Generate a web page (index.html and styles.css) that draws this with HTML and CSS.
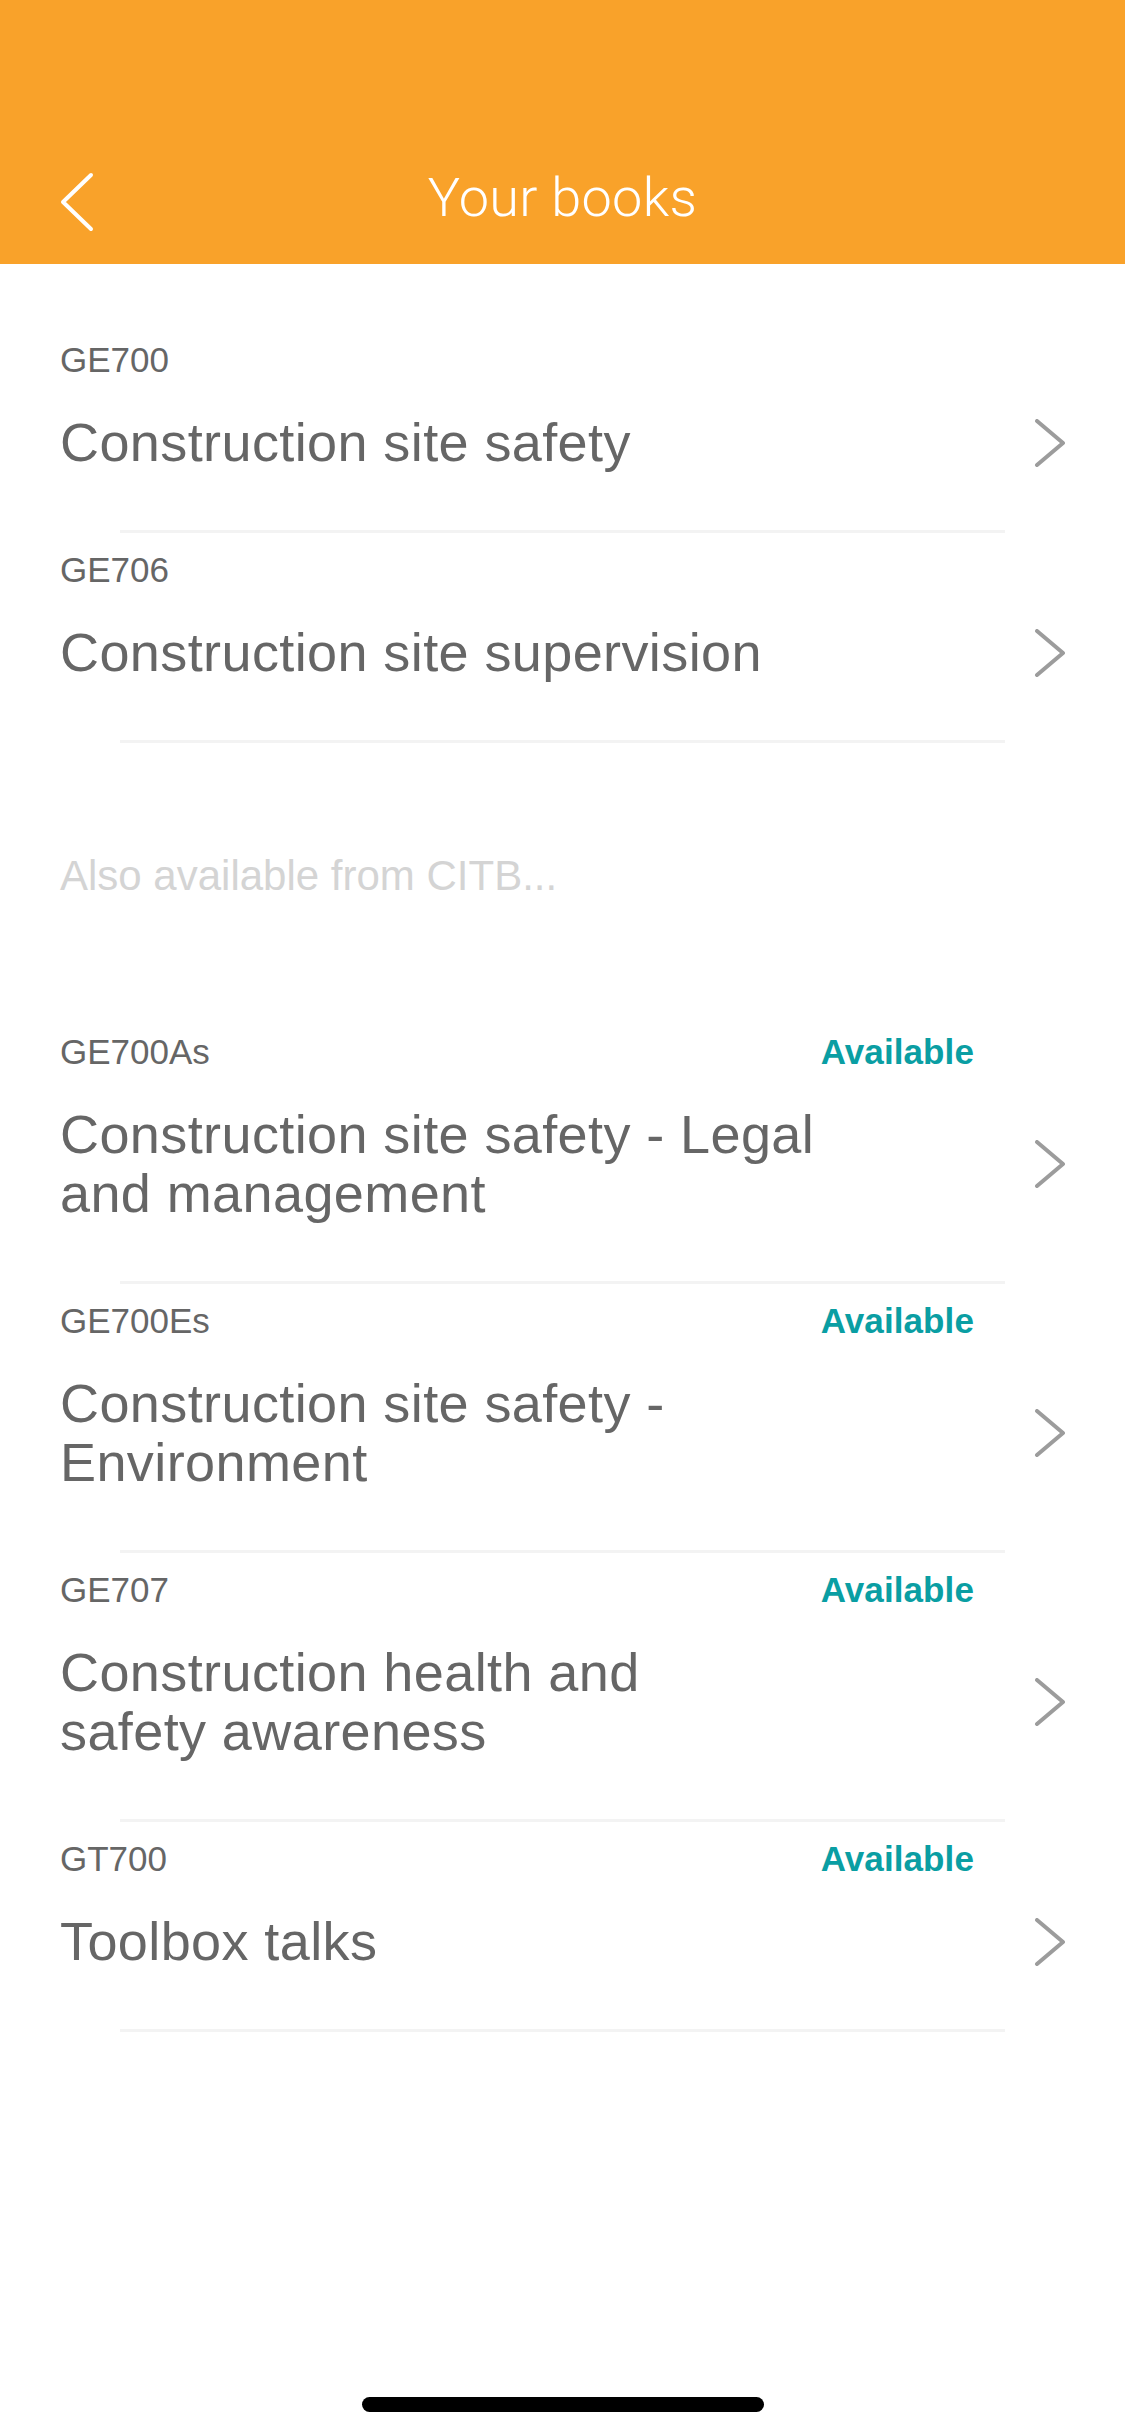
FILE: index.html
```html
<!DOCTYPE html>
<html lang="en">
<head>
<meta charset="utf-8">
<title>Your books</title>
<link rel="stylesheet" href="styles.css">
</head>
<body>
<div class="screen">
  <header class="appbar">
    <div class="statusbar"></div>
    <nav class="navbar">
      <button class="back" aria-label="Back">
        <svg class="back-icon" viewBox="0 0 36 60" width="36" height="60">
          <polyline points="33,3 5,30 33,57" fill="none" stroke="#ffffff" stroke-width="4" stroke-linecap="round" stroke-linejoin="round"/>
        </svg>
      </button>
      <h1 class="nav-title">Your books</h1>
      <span class="nav-spacer"></span>
    </nav>
  </header>

  <main class="content">
    <section class="group group-owned">
      <a class="row">
        <div class="row-inner">
          <div class="code-line"><span class="code">GE700</span></div>
          <div class="title-line">
            <span class="title">Construction site safety</span>
            <svg class="chev" viewBox="0 0 32 48" width="32" height="48"><polyline points="3,2 29,24 3,46" fill="none" stroke="#9c9c9c" stroke-width="4" stroke-linecap="round" stroke-linejoin="round"/></svg>
          </div>
        </div>
      </a>
      <a class="row">
        <div class="row-inner">
          <div class="code-line"><span class="code">GE706</span></div>
          <div class="title-line">
            <span class="title">Construction site supervision</span>
            <svg class="chev" viewBox="0 0 32 48" width="32" height="48"><polyline points="3,2 29,24 3,46" fill="none" stroke="#9c9c9c" stroke-width="4" stroke-linecap="round" stroke-linejoin="round"/></svg>
          </div>
        </div>
      </a>
    </section>

    <p class="section-label">Also available from CITB...</p>

    <section class="group group-store">
      <a class="row">
        <div class="row-inner">
          <div class="code-line"><span class="code">GE700As</span><span class="status">Available</span></div>
          <div class="title-line">
            <span class="title">Construction site safety - Legal<br>and management</span>
            <svg class="chev" viewBox="0 0 32 48" width="32" height="48"><polyline points="3,2 29,24 3,46" fill="none" stroke="#9c9c9c" stroke-width="4" stroke-linecap="round" stroke-linejoin="round"/></svg>
          </div>
        </div>
      </a>
      <a class="row">
        <div class="row-inner">
          <div class="code-line"><span class="code">GE700Es</span><span class="status">Available</span></div>
          <div class="title-line">
            <span class="title">Construction site safety -<br>Environment</span>
            <svg class="chev" viewBox="0 0 32 48" width="32" height="48"><polyline points="3,2 29,24 3,46" fill="none" stroke="#9c9c9c" stroke-width="4" stroke-linecap="round" stroke-linejoin="round"/></svg>
          </div>
        </div>
      </a>
      <a class="row">
        <div class="row-inner">
          <div class="code-line"><span class="code">GE707</span><span class="status">Available</span></div>
          <div class="title-line">
            <span class="title">Construction health and<br>safety awareness</span>
            <svg class="chev" viewBox="0 0 32 48" width="32" height="48"><polyline points="3,2 29,24 3,46" fill="none" stroke="#9c9c9c" stroke-width="4" stroke-linecap="round" stroke-linejoin="round"/></svg>
          </div>
        </div>
      </a>
      <a class="row">
        <div class="row-inner">
          <div class="code-line"><span class="code">GT700</span><span class="status">Available</span></div>
          <div class="title-line">
            <span class="title">Toolbox talks</span>
            <svg class="chev" viewBox="0 0 32 48" width="32" height="48"><polyline points="3,2 29,24 3,46" fill="none" stroke="#9c9c9c" stroke-width="4" stroke-linecap="round" stroke-linejoin="round"/></svg>
          </div>
        </div>
      </a>
    </section>
  </main>

  <footer class="home-bar">
    <div class="home-indicator"></div>
  </footer>
</div>
</body>
</html>
```

FILE: styles.css
```css
html, body {
  margin: 0;
  padding: 0;
  background: #ffffff;
}

body {
  font-family: "Liberation Sans", Arial, Helvetica, sans-serif;
  color: #666666;
}

.screen {
  width: 1125px;
  height: 2436px;
  display: flex;
  flex-direction: column;
  overflow: hidden;
  background: #ffffff;
}

/* Header */
.appbar {
  background: #f9a22a;
  height: 264px;
  display: flex;
  flex-direction: column;
  flex: none;
}

.statusbar {
  height: 132px;
}

.navbar {
  height: 132px;
  display: grid;
  grid-template-columns: 1fr auto 1fr;
  align-items: center;
  padding: 0 58px;
}

.back {
  justify-self: start;
  background: none;
  border: 0;
  padding: 0;
  margin: 7px 0 0 0;
  display: flex;
  cursor: pointer;
}

.back-icon {
  display: block;
}

.nav-title {
  margin: 0;
  font-family: Roboto, "Liberation Sans", sans-serif;
  font-weight: 300;
  font-size: 54px;
  line-height: 64px;
  color: #ffffff;
  letter-spacing: 0.3px;
}

.nav-spacer {
  display: block;
}

/* List */
.content {
  flex: 1;
}

.group-owned {
  padding-top: 59px;
}

.row {
  display: block;
  text-decoration: none;
  color: inherit;
}

.row::after {
  content: "";
  display: block;
  height: 3px;
  margin: 0 120px;
  background: #f3f3f3;
}

.row-inner {
  padding: 17px 59px 58px 60px;
}

.code-line {
  display: flex;
  justify-content: space-between;
  align-items: baseline;
  margin-right: 92px;
  height: 40px;
  line-height: 40px;
}

.code {
  font-size: 35px;
  color: #666666;
}

.status {
  font-size: 35px;
  font-weight: 700;
  color: #0a9ea3;
  letter-spacing: 0.1px;
}

.title-line {
  margin-top: 33px;
  display: flex;
  align-items: center;
  justify-content: space-between;
}

.title {
  font-size: 54px;
  line-height: 59px;
  color: #666666;
  letter-spacing: 0.4px;
}

.chev {
  display: block;
  flex: none;
}

.section-label {
  margin: 108px 0 114px 0;
  padding-left: 60px;
  font-size: 42px;
  line-height: 50px;
  color: #d4d4d4;
}

/* Home indicator */
.home-bar {
  flex: none;
  display: flex;
  justify-content: center;
  padding-bottom: 24px;
}

.home-indicator {
  width: 402px;
  height: 15px;
  border-radius: 8px;
  background: #000000;
}
```
